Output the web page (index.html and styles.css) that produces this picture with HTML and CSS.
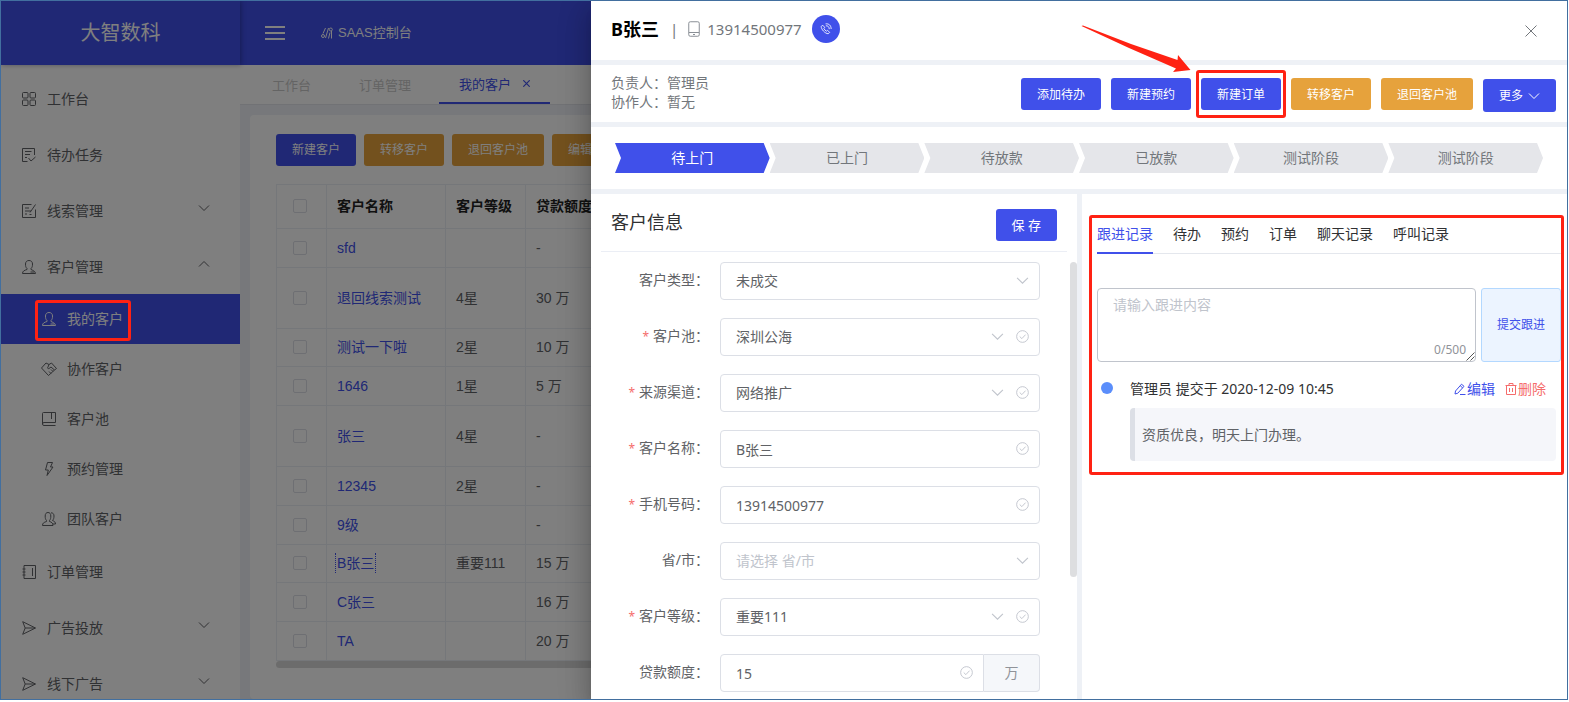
FILE: index.html
```html
<!DOCTYPE html>
<html lang="zh-CN">
<head>
<meta charset="utf-8">
<title>大智数科</title>
<link rel="stylesheet" href="styles.css">
</head>
<body>
<svg class="sprite" aria-hidden="true">
  <symbol id="i-grid" viewBox="0 0 14 14"><rect x=".5" y=".5" width="5.5" height="5.5" rx="1"/><rect x="8" y=".5" width="5.5" height="5.5" rx="1"/><rect x=".5" y="8" width="5.5" height="5.5" rx="1"/><rect x="8" y="8" width="5.5" height="5.5" rx="1"/></symbol>
  <symbol id="i-todo" viewBox="0 0 14 14"><path d="M12.5 7V.5H.5v13h5M3 3.5h6.500M3 6.500h5M3 9.500h2M6.500 10l2.500 3 4.500-4"/></symbol>
  <symbol id="i-note" viewBox="0 0 14 14"><path d="M9.500.5h-9v13h13V5.500M3 4h4M3 7h6M3 10h2M8 8.500L13.500.5M7.500 10.500h2"/></symbol>
  <symbol id="i-user" viewBox="0 0 14 14"><path d="M.5 13.500c0-2.500 2-3.200 4.500-4v-1C3.700 7.300 3.500 6 3.500 4 3.500 1.700 5 .5 7 .5s3.500 1.200 3.500 3.500c0 2-.2 3.300-1.500 4.500v1M.5 13.500h13c0-1.500-1-2.500-4.500-4M8.500 12h4"/></symbol>
  <symbol id="i-team" viewBox="0 0 14 14"><path d="M.5 13.500c0-2.500 1.500-3.200 4-4v-1C3.400 7.300 3.200 6 3.200 4c0-2.300 1-3.500 2.800-3.500S8.800 1.700 8.800 4c0 2-.2 3.300-1.300 4.500v1c2 .6 3.500 1.500 3.500 4zM9 .8c2 0 3 1.200 3 3.200 0 2-.4 3.300-1.500 4.500 2 .8 3 1.700 3 3.500H11"/></symbol>
  <symbol id="i-hands" viewBox="0 0 16 14"><path d="M.5 6L5 1l3 1.500L10.500 1l5 5.500-2 1.500M.5 6l7 7.500 6-5.500-3.500-3-2 1.500c-1 .5-2-.5-1-1.500L8 2.500M10 11.500L8 9.500M12 9.500l-2-2"/></symbol>
  <symbol id="i-book" viewBox="0 0 14 14"><path d="M.5 12V1.500q0-1 1-1h12v10H2q-1.500 0-1.500 1.500t1.500 1.500h11.500M9.500 1v6"/></symbol>
  <symbol id="i-bolt" viewBox="0 0 14 14"><path d="M5.500.5h5L8.500 5h2.500l-6 8.500L6.300 8H3.500z"/></symbol>
  <symbol id="i-ledger" viewBox="0 0 14 14"><path d="M2 .5h11.500v13H2zM.5 4h3M.5 7h3M.5 10h3M10.500 3v8"/></symbol>
  <symbol id="i-send" viewBox="0 0 14 14"><path d="M.7.700L13.500 7 .7 13.300 3.200 7zM3.200 7h10"/></symbol>
  <symbol id="i-down" viewBox="0 0 12 12"><path d="M1 3.500l5 5 5-5"/></symbol>
  <symbol id="i-up" viewBox="0 0 12 12"><path d="M1 8.500l5-5 5 5"/></symbol>
  <symbol id="i-check" viewBox="0 0 14 14"><circle cx="7" cy="7" r="6.300"/><path d="M4 7l2.300 2.300L10.300 5"/></symbol>
  <symbol id="i-close" viewBox="0 0 12 12"><path d="M.5.5l11 11M11.500.5l-11 11"/></symbol>
  <symbol id="i-saas" viewBox="0 0 12 12"><path d="M2 6.500L4.500 1M4.500 11L7.500 1M7.500 11.500L9 5.500M10.500 4v7.500"/><circle cx="2" cy="9" r="1.500"/><circle cx="9.800" cy="2.500" r="1.500"/></symbol>
  <symbol id="i-mobile" viewBox="0 0 12 16"><rect x=".75" y=".75" width="10.500" height="14.500" rx="1.500"/><path d="M1 11.500h10M5 13.500h2"/></symbol>
  <symbol id="i-call" viewBox="0 0 14 14"><path d="M3 2.500L1.500 4c-.5 3 4.500 8.500 8 8.500L11.300 11 8.800 8.500l-1.300 1C6.200 9 5 7.500 4.500 6.300l1-1.300zM6.500 1c4-.5 6.500 2 6.500 6M6.800 3.200c2.500 0 4 1.300 4 4"/></symbol>
  <symbol id="i-pen" viewBox="0 0 12 12"><path d="M7.500 1.200L1.500 8 1 11l2.800-.8L10 3.300zM6.200 2.700l2.500 2.200M6 11.500h5.500"/></symbol>
  <symbol id="i-trash" viewBox="0 0 12 12"><path d="M.5 2.500h11M4 2.500v-2h4v2M1.500 2.500v9h9v-9M4.500 5v4M7.500 5v4"/></symbol>
</svg>

<div class="window">
  <div class="app">
    <div class="logo">大智数科</div>
    <header class="topbar">
      <button class="burger" aria-label="菜单"><span></span><span></span><span></span></button>
      <a class="console" href="#"><svg class="ico ico-s"><use href="#i-saas"/></svg>SAAS控制台</a>
    </header>
    <nav class="sidebar">
      <a class="item" href="#"><svg class="ico"><use href="#i-grid"/></svg>工作台</a>
      <a class="item" href="#"><svg class="ico"><use href="#i-todo"/></svg>待办任务</a>
      <a class="item" href="#"><svg class="ico"><use href="#i-note"/></svg>线索管理<svg class="ico fold"><use href="#i-down"/></svg></a>
      <a class="item" href="#"><svg class="ico"><use href="#i-user"/></svg>客户管理<svg class="ico fold"><use href="#i-up"/></svg></a>
      <div class="submenu">
        <a class="sub active" href="#"><svg class="ico"><use href="#i-user"/></svg>我的客户</a>
        <a class="sub" href="#"><svg class="ico"><use href="#i-hands"/></svg>协作客户</a>
        <a class="sub" href="#"><svg class="ico"><use href="#i-book"/></svg>客户池</a>
        <a class="sub" href="#"><svg class="ico"><use href="#i-bolt"/></svg>预约管理</a>
        <a class="sub" href="#"><svg class="ico"><use href="#i-team"/></svg>团队客户</a>
      </div>
      <a class="item" href="#"><svg class="ico"><use href="#i-ledger"/></svg>订单管理</a>
      <a class="item" href="#"><svg class="ico"><use href="#i-send"/></svg>广告投放<svg class="ico fold"><use href="#i-down"/></svg></a>
      <a class="item" href="#"><svg class="ico"><use href="#i-send"/></svg>线下广告<svg class="ico fold"><use href="#i-down"/></svg></a>
    </nav>
    <main class="main">
      <div class="pages">
        <a class="page" href="#">工作台</a>
        <a class="page" href="#">订单管理</a>
        <a class="page current" href="#">我的客户<svg class="ico ico-x"><use href="#i-close"/></svg></a>
      </div>
      <section class="card">
        <div class="toolbar">
          <button class="btn">新建客户</button>
          <button class="btn warn">转移客户</button>
          <button class="btn warn">退回客户池</button>
          <button class="btn warn">编辑客户</button>
        </div>
        <table class="grid">
          <colgroup><col class="c-check"><col class="c-name"><col class="c-level"><col></colgroup>
          <thead>
            <tr><th><input type="checkbox" aria-label="全选"></th><th>客户名称</th><th>客户等级</th><th>贷款额度</th></tr>
          </thead>
          <tbody>
            <tr><td><input type="checkbox" aria-label="sfd"></td><td><a href="#">sfd</a></td><td></td><td>-</td></tr>
            <tr class="tall"><td><input type="checkbox" aria-label="退回线索测试"></td><td><a href="#">退回线索测试</a></td><td>4星</td><td>30 万</td></tr>
            <tr class="tight"><td><input type="checkbox" aria-label="测试一下啦"></td><td><a href="#">测试一下啦</a></td><td>2星</td><td>10 万</td></tr>
            <tr><td><input type="checkbox" aria-label="1646"></td><td><a href="#">1646</a></td><td>1星</td><td>5 万</td></tr>
            <tr class="tall"><td><input type="checkbox" aria-label="张三"></td><td><a href="#">张三</a></td><td>4星</td><td>-</td></tr>
            <tr><td><input type="checkbox" aria-label="12345"></td><td><a href="#">12345</a></td><td>2星</td><td>-</td></tr>
            <tr><td><input type="checkbox" aria-label="9级"></td><td><a href="#">9级</a></td><td></td><td>-</td></tr>
            <tr class="tight"><td><input type="checkbox" aria-label="B张三"></td><td><a class="focused" href="#">B张三</a></td><td>重要111</td><td>15 万</td></tr>
            <tr><td><input type="checkbox" aria-label="C张三"></td><td><a href="#">C张三</a></td><td></td><td>16 万</td></tr>
            <tr><td><input type="checkbox" aria-label="TA"></td><td><a href="#">TA</a></td><td></td><td>20 万</td></tr>
          </tbody>
        </table>
        <div class="hscroll"></div>
      </section>
    </main>
  </div>
  <div class="mask"></div>

  <aside class="drawer">
    <header class="d-head">
      <h1>B张三</h1><span class="bar">|</span>
      <svg class="ico mobile"><use href="#i-mobile"/></svg><span class="phone">13914500977</span>
      <button class="call" aria-label="拨打电话"><svg class="ico"><use href="#i-call"/></svg></button>
      <button class="close" aria-label="关闭"><svg class="ico"><use href="#i-close"/></svg></button>
    </header>
    <div class="d-actions">
      <div class="owners"><div>负责人：管理员</div><div>协作人：暂无</div></div>
      <div class="buttons">
        <button class="btn">添加待办</button>
        <button class="btn">新建预约</button>
        <span class="marked"><button class="btn">新建订单</button></span>
        <button class="btn warn">转移客户</button>
        <button class="btn warn">退回客户池</button>
        <button class="btn more">更多<svg class="ico"><use href="#i-down"/></svg></button>
      </div>
    </div>
    <ol class="steps">
      <li class="on">待上门</li><li>已上门</li><li>待放款</li><li>已放款</li><li>测试阶段</li><li>测试阶段</li>
    </ol>
    <div class="panels">
      <section class="info">
        <div class="info-head"><h2>客户信息</h2><button class="btn save">保 存</button></div>
        <form class="form">
          <div class="row"><label for="f1">客户类型：</label><div class="field"><select id="f1"><option>未成交</option></select><span class="suffix"><svg class="ico"><use href="#i-down"/></svg></span></div></div>
          <div class="row"><label class="req" for="f2">客户池：</label><div class="field"><select id="f2"><option>深圳公海</option></select><span class="suffix"><svg class="ico"><use href="#i-down"/></svg><svg class="ico ok"><use href="#i-check"/></svg></span></div></div>
          <div class="row"><label class="req" for="f3">来源渠道：</label><div class="field"><select id="f3"><option>网络推广</option></select><span class="suffix"><svg class="ico"><use href="#i-down"/></svg><svg class="ico ok"><use href="#i-check"/></svg></span></div></div>
          <div class="row"><label class="req" for="f4">客户名称：</label><div class="field"><input id="f4" type="text" value="B张三"><span class="suffix"><svg class="ico ok"><use href="#i-check"/></svg></span></div></div>
          <div class="row"><label class="req" for="f5">手机号码：</label><div class="field"><input id="f5" type="text" value="13914500977"><span class="suffix"><svg class="ico ok"><use href="#i-check"/></svg></span></div></div>
          <div class="row"><label for="f6">省/市：</label><div class="field"><select id="f6" class="empty"><option>请选择 省/市</option></select><span class="suffix"><svg class="ico"><use href="#i-down"/></svg></span></div></div>
          <div class="row"><label class="req" for="f7">客户等级：</label><div class="field"><select id="f7"><option>重要111</option></select><span class="suffix"><svg class="ico"><use href="#i-down"/></svg><svg class="ico ok"><use href="#i-check"/></svg></span></div></div>
          <div class="row"><label for="f8">贷款额度：</label><div class="group"><div class="field"><input id="f8" type="text" value="15"><span class="suffix"><svg class="ico ok"><use href="#i-check"/></svg></span></div><span class="unit">万</span></div></div>
        </form>
        <div class="vthumb"></div>
      </section>
      <section class="records">
        <div class="tabs">
          <button class="tab on">跟进记录</button><button class="tab">待办</button><button class="tab">预约</button><button class="tab">订单</button><button class="tab">聊天记录</button><button class="tab">呼叫记录</button>
        </div>
        <div class="compose">
          <div class="box"><textarea placeholder="请输入跟进内容" aria-label="跟进内容"></textarea><span class="count">0/500</span><svg class="grip" viewBox="0 0 9 9"><path d="M.5 8.500l8-8M4.500 8.500l4-4"/></svg></div>
          <button class="submit">提交跟进</button>
        </div>
        <article class="log">
          <span class="dot"></span>
          <div class="log-body">
            <div class="log-head"><span>管理员 提交于 2020-12-09 10:45</span>
              <span class="ops"><a href="#"><svg class="ico"><use href="#i-pen"/></svg>编辑</a><a class="del" href="#"><svg class="ico"><use href="#i-trash"/></svg>删除</a></span></div>
            <blockquote>资质优良，明天上门办理。</blockquote>
          </div>
        </article>
        <div class="frame"></div>
      </section>
    </div>
    <svg class="arrow" viewBox="0 0 110 50"><path d="M.5 1L2 .5 50 19l46.500 16 .5-5 12.500 15-17.500 2 3-3.500L48 23z"/></svg>
  </aside>
  <div class="menu-mark"></div>
</div>
</body>
</html>
```
FILE: styles.css
```css
* { box-sizing: border-box; }
:root { --blue: #4050ea; --orange: #e6a23c; --strip: #eef1f6; --red: #ff2213; }
body { margin: 0; background: #fff; color: #606266; font: 14px/20px "Noto Sans", "Noto Sans CJK SC", sans-serif; }
a { color: inherit; text-decoration: none; }
h1, h2, ol, blockquote { margin: 0; padding: 0; }
button { border: 0; padding: 0; background: none; color: inherit; font: inherit; cursor: pointer; }
.sprite { display: none; }
.ico { width: 14px; height: 14px; flex: none; fill: none; stroke: currentColor; stroke-width: 1; }

.window { position: relative; height: calc(100vh - 2px); margin-right: 1px; border: 1px solid #426f9f; overflow: hidden; }
.app { isolation: isolate; display: grid; grid-template-columns: 239px 1fr; grid-template-rows: 64px 1fr; height: 100%; }
.mask { position: absolute; inset: 0; background: rgba(0, 0, 0, .5); }

.logo { position: relative; z-index: 1; display: flex; align-items: center; justify-content: center; background: var(--blue); color: #fff; font-size: 20px; box-shadow: 1px 0 5px rgba(0, 10, 40, .35); }
.topbar { display: flex; align-items: center; gap: 36px; padding-left: 25px; background: var(--blue); color: #fff; font-size: 13px; font-family: "Liberation Sans", "Noto Sans CJK SC", sans-serif; }
.burger { display: grid; gap: 4px; width: 20px; }
.burger span { height: 2px; background: #fff; }
.console { display: flex; align-items: center; gap: 5px; }
.ico-s { width: 12px; height: 12px; }

.sidebar { padding-top: 6px; overflow: hidden; }
.item { display: flex; align-items: center; gap: 11px; height: 56px; padding: 0 30px 0 21px; }
.fold { width: 12px; height: 12px; margin: 0 0 6px auto; }
.submenu { margin-top: -1px; }
.sub { display: flex; align-items: center; gap: 10px; height: 50px; padding-left: 40px; }
.sub .ico { width: 16px; }
.sub.active { background: var(--blue); color: #fff; }

.main { display: flex; flex-direction: column; min-width: 0; background: var(--strip); }
.pages { display: flex; gap: 8px; height: 40px; padding-left: 12px; background: #fff; border-bottom: 1px solid #e2e5ea; color: #c8c8c8; font-size: 13px; }
.page { display: flex; align-items: center; padding: 0 20px; }
.page.current { color: var(--blue); border-bottom: 2px solid var(--blue); gap: 12px; }
.ico-x { width: 7px; height: 7px; stroke-width: 2; }
.card { flex: 1; margin: 10px 10px 0; padding: 19px 26px; background: #fff; border-radius: 4px; }
.toolbar { display: flex; gap: 8px; margin-bottom: 18px; }
.btn { height: 32px; padding: 0 16px; border-radius: 3px; background: var(--blue); color: #fff; font-size: 12px; white-space: nowrap; }
.btn.warn { background: var(--orange); }

.grid { width: 100%; table-layout: fixed; border-collapse: collapse; font-family: "Liberation Sans", "Noto Sans CJK SC", sans-serif; }
.grid th, .grid td { height: 39px; padding: 0 10px 1px; border: 1px solid #ebeef5; text-align: left; }
.grid th { height: 44px; color: #222; }
.grid .tall td { height: 61px; }
.grid .tight td { height: 38px; }
.grid th:first-child, .grid td:first-child { padding: 0 3px 1px 0; }
.grid a { color: var(--blue); }
.grid .focused { margin-left: -2px; padding: 2px 1px; border: dotted var(--blue); border-width: 0 1px; }
.c-check { width: 50px; }
.c-name { width: 119px; }
.c-level { width: 80px; }
.grid input { appearance: none; display: block; width: 14px; height: 14px; margin: 0 auto; border: 1px solid #dcdfe6; border-radius: 2px; background: #fff; }
.hscroll { height: 7px; border-radius: 4px; background: #d8d8d8; }

.drawer { position: absolute; top: 0; bottom: 0; left: 590px; right: 0; display: flex; flex-direction: column; background: #fff; box-shadow: 0 8px 10px -5px rgba(0, 0, 0, .2), 0 16px 24px 2px rgba(0, 0, 0, .14), 0 6px 30px 5px rgba(0, 0, 0, .12); }
.d-head { display: flex; align-items: center; height: 64px; padding: 0 30px 3px 20px; border-bottom: 5px solid var(--strip); color: #72767b; font-size: 15px; }
.d-head h1 { color: #000; font-size: 18px; line-height: 24px; }
.bar { margin: 0 10px 0 11px; }
.mobile { width: 12px; height: 16px; margin-right: 7px; color: #8a8f96; }
.call { display: grid; place-items: center; width: 28px; height: 28px; margin-left: 10px; border-radius: 50%; background: var(--blue); color: #fff; }
.call .ico { width: 12px; height: 12px; stroke-width: 1; }
.close { display: flex; margin-left: auto; padding-top: 4px; }
.close .ico { width: 12px; height: 12px; }
.d-actions { display: flex; justify-content: space-between; height: 62px; padding: 8px 11px 0 20px; border-bottom: 5px solid var(--strip); color: #72767b; line-height: 19px; }
.buttons { display: flex; gap: 10px; align-items: flex-start; padding-top: 5px; }
.marked { position: relative; display: flex; }
.marked::after { content: ""; position: absolute; inset: -8px -5px; border: 3px solid var(--red); border-radius: 3px; }
.more { display: flex; align-items: center; gap: 5px; height: 33px; margin-top: 1px; }
.more .ico { width: 12px; height: 12px; }
.steps { display: flex; height: 67px; padding: 16px 24px; border-bottom: 5px solid var(--strip); list-style: none; color: #72767b; }
.steps li { flex: 1; height: 30px; background: #e5e6ea; line-height: 30px; text-align: center; clip-path: polygon(0 0, calc(100% - 6px) 0, 100% 50%, calc(100% - 6px) 100%, 0 100%, 6px 50%); }
.steps .on { background: var(--blue); color: #fff; }

.panels { flex: 1; display: grid; grid-template-columns: 491fr 485fr; min-height: 0; }
.info { position: relative; border-right: 5px solid var(--strip); overflow: hidden; }
.info-head { display: flex; align-items: center; justify-content: space-between; height: 58px; margin: 0 10px; padding: 4px 10px 0; border-bottom: 1px solid #ebeef5; }
.info-head h2 { padding-bottom: 6px; color: #303133; font-size: 18px; font-weight: 400; }
.save { font-size: 13px; }
.form { display: grid; gap: 18px; padding: 10px 37px 20px 10px; }
.row { display: grid; grid-template-columns: 108px 1fr; gap: 11px; height: 38px; }
.row label { text-align: right; line-height: 36px; }
.req::before { content: "*"; margin-right: 4px; color: #f56c6c; font-size: 12px; }
.field { position: relative; flex: 1; }
.field select, .field input { appearance: none; display: block; width: 100%; height: 38px; padding: 0 15px; border: 1px solid #dcdfe6; border-radius: 4px; background: #fff; color: #606266; font: inherit; }
.field .empty { color: #c0c4cc; }
.suffix { position: absolute; top: 0; right: 11px; display: flex; align-items: center; gap: 12px; height: 37px; color: #c0c4cc; pointer-events: none; }
.suffix .ico { width: 13px; height: 13px; }
.group { display: flex; }
.group .field input { border-radius: 4px 0 0 4px; }
.unit { width: 56px; border: 1px solid #dcdfe6; border-left: 0; border-radius: 0 4px 4px 0; background: #f5f7fa; color: #909399; line-height: 36px; text-align: center; }
.vthumb { position: absolute; top: 68px; right: 0; width: 7px; height: 315px; border-radius: 4px; background: #dddee0; }

.records { position: relative; min-width: 0; padding: 20px 6px 0 15px; }
.tabs { display: flex; gap: 20px; height: 40px; border-bottom: 1px solid #e4e7ed; color: #303133; }
.tab { height: 40px; padding-top: 2px; border-bottom: 2px solid transparent; white-space: nowrap; }
.tab.on { color: var(--blue); border-color: var(--blue); }
.compose { display: flex; gap: 5px; height: 74px; margin-top: 34px; }
.box { position: relative; flex: 1; }
.box textarea { display: block; width: 100%; height: 74px; padding: 6px 15px; border: 1px solid #c0c4cc; border-radius: 4px; font: inherit; resize: none; }
.box textarea::placeholder { color: #c0c4cc; }
.count { position: absolute; right: 10px; bottom: 2px; color: #909399; font-size: 12px; }
.grip { position: absolute; right: 1px; bottom: 1px; width: 9px; height: 9px; stroke: #555; fill: none; }
.submit { width: 80px; border: 1px solid #b3d8ff; border-radius: 3px; background: #ecf4ff; color: var(--blue); font-size: 12px; }
.log { display: flex; gap: 17px; margin: 17px 5px 0 4px; }
.dot { width: 12px; height: 12px; margin-top: 3px; border-radius: 50%; background: #5b8efb; }
.log-body { flex: 1; }
.log-head { display: flex; justify-content: space-between; padding-right: 10px; color: #303133; }
.ops { display: flex; gap: 10px; color: var(--blue); }
.ops a { display: flex; align-items: center; gap: 1px; }
.ops .ico { width: 12px; height: 12px; }
.ops .del { color: #f56c6c; }
.log blockquote { height: 53px; margin-top: 9px; padding: 0 7px; border-left: 5px solid #dcdfe6; border-radius: 4px; background: #f5f6fa; line-height: 53px; }
.frame { position: absolute; top: 21px; left: 7px; right: 3px; height: 260px; border: 3px solid var(--red); border-radius: 3px; }
.arrow { position: absolute; top: 24px; left: 490px; width: 110px; height: 50px; fill: var(--red); }
.menu-mark { position: absolute; top: 299px; left: 34px; width: 96px; height: 41px; border: 3px solid var(--red); border-radius: 3px; }
```
